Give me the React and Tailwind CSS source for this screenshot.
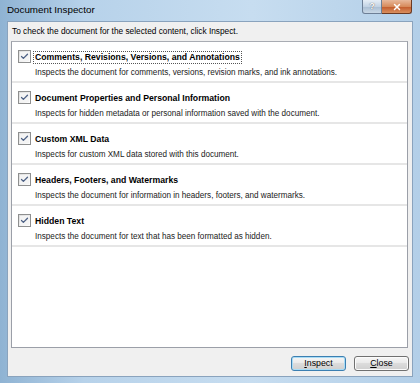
import { Check, X } from "lucide-react";

const rows = [
  { title: "Comments, Revisions, Versions, and Annotations", desc: "Inspects the document for comments, versions, revision marks, and ink annotations.", focus: true },
  { title: "Document Properties and Personal Information", desc: "Inspects for hidden metadata or personal information saved with the document." },
  { title: "Custom XML Data", desc: "Inspects for custom XML data stored with this document." },
  { title: "Headers, Footers, and Watermarks", desc: "Inspects the document for information in headers, footers, and watermarks." },
  { title: "Hidden Text", desc: "Inspects the document for text that has been formatted as hidden." },
];

const ui = { fontFamily: '"Liberation Sans", Arial, sans-serif' };

function Box() {
  return (
    <div className="w-[13px] h-[13px] border border-[#8e8f8f] bg-[linear-gradient(135deg,#dcdcdc,#ffffff)] flex items-center justify-center shrink-0">
      <div className="w-[9px] h-[9px] bg-[#f4f4f4] flex items-center justify-center">
        <Check size={9} strokeWidth={3.5} className="text-[#4d6185]" />
      </div>
    </div>
  );
}

function Row({ title, desc, focus }) {
  return (
    <div className="h-[41px] border-b-2 border-[#e6e6e6] flex items-start pl-[6px] pt-[8px]">
      <Box />
      <div className="ml-[2px] flex flex-col">
        <div className={"text-[8.7px] font-bold leading-[11px] text-black px-[1px] mt-[1px] self-start border border-dotted " + (focus ? "border-[#555]" : "border-transparent")}>
          {title}
        </div>
        <div className="text-[8.15px] leading-[11px] text-[#222] pl-[2px] mt-[3px]">{desc}</div>
      </div>
    </div>
  );
}

function Btn({ label, k, main }) {
  return (
    <button
      className={
        "w-[55px] h-[15px] rounded-[3px] border text-[8.8px] leading-none text-black bg-[linear-gradient(#f6f6f6_0%,#e9e9e9_49%,#dcdcdc_50%,#cfcfcf_100%)] " +
        (main ? "border-[#3c7fb1] shadow-[inset_0_0_0_1px_#a8dcf6]" : "border-[#707070] shadow-[inset_0_0_0_1px_#fbfbfb]")
      }
    >
      <span className="underline">{k}</span>
      {label}
    </button>
  );
}

export default function App() {
  return (
    <div className="w-[420px] h-[383px] flex flex-col bg-[linear-gradient(90deg,#8fb3d3,#b7d2ea_20%,#c7ddf0_60%,#b3cfe8)]" style={ui}>
      <div className="h-[21px] flex items-start shrink-0">
        <div className="pl-[7px] pt-[4px] text-[9.8px] leading-[12px] text-black">Document Inspector</div>
        <div className="ml-auto mr-[8px] flex">
          <div className="w-[20px] h-[14px] rounded-bl-[3px] border border-t-0 border-[#6d7f96] bg-[linear-gradient(#e6eef6,#c3d3e4_50%,#a9bdd2_51%,#c9d8e6)] flex items-center justify-center text-[9px] font-bold text-white [text-shadow:0_0_1px_#333]">
            ?
          </div>
          <div className="w-[30px] h-[14px] rounded-br-[3px] border border-t-0 border-l-0 border-[#6b3a23] bg-[linear-gradient(#e8b99c,#d78b5c_50%,#c2592a_51%,#d9905f)] flex items-center justify-center">
            <X size={10} strokeWidth={3.5} className="text-white" />
          </div>
        </div>
      </div>
      <div className="flex-1 mx-[7px] mb-[6px] bg-[#f0f0f0] border border-[#8aa3bd] flex flex-col">
        <div className="h-[19px] pl-[4px] pt-[4px] text-[8.3px] leading-[11px] text-black">To check the document for the selected content, click Inspect.</div>
        <div className="ml-[3px] mr-[4px] h-[307px] bg-white border border-[#9b9fa8] border-t-[#a9acb3]">
          {rows.map((r) => (
            <Row key={r.title} {...r} />
          ))}
        </div>
        <div className="flex justify-end gap-[8px] pr-[3px] pt-[8px]">
          <Btn k="I" label="nspect" main />
          <Btn k="C" label="lose" />
        </div>
      </div>
    </div>
  );
}
